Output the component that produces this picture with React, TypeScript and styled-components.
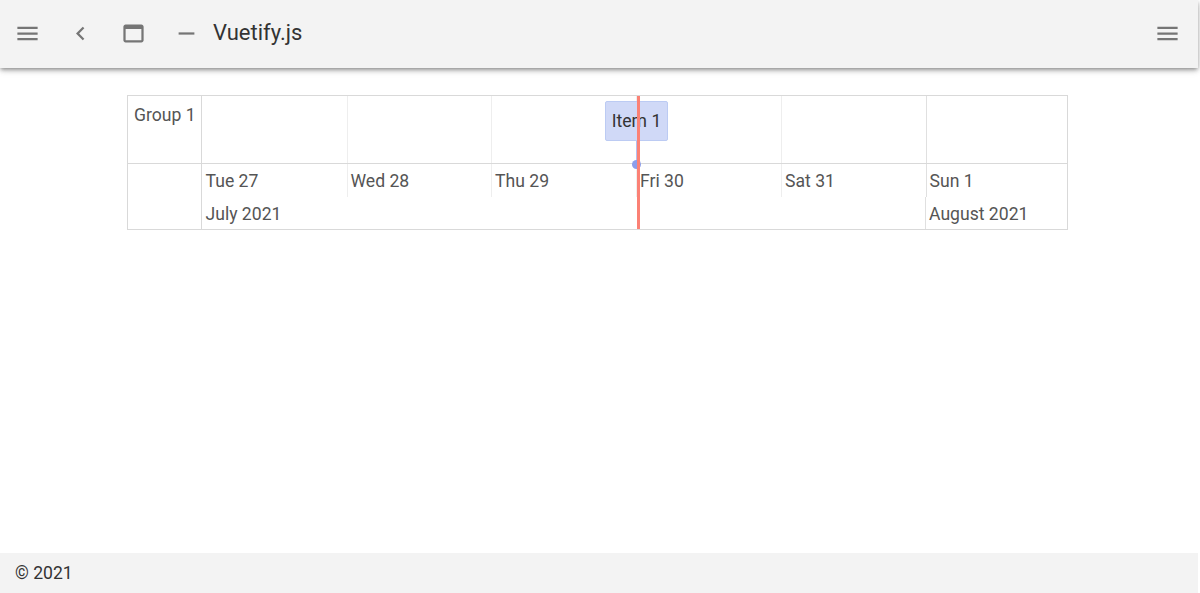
import React from 'react'
import styled, { createGlobalStyle } from 'styled-components'

const days = [
  { label: 'Tue 27', width: 145.5 },
  { label: 'Wed 28', width: 144.5 },
  { label: 'Thu 29', width: 145 },
  { label: 'Fri 30', width: 145 },
  { label: 'Sat 31', width: 144.5 },
  { label: 'Sun 1', width: 140 }
]

const Icon = ({ d }: { d: string }) => (
  <StyledIcon viewBox='0 0 24 24'>
    <path d={d} />
  </StyledIcon>
)

const MENU = 'M3,6H21V8H3V6M3,11H21V13H3V11M3,16H21V18H3V16Z'
const CHEVRON = 'M15.41,16.58L10.83,12L15.41,7.41L14,6L8,12L14,18L15.41,16.58Z'
const WINDOW = 'M19 4H5c-1.11 0-2 .9-2 2v12c0 1.1.89 2 2 2h14c1.1 0 2-.9 2-2V6c0-1.1-.89-2-2-2zm0 14H5V8h14v10z'
const MINUS = 'M19,13H5V11H19V13Z'

const App = () => {
  return (
    <StyledRoot>
      <GlobalStyle />
      <StyledBar>
        <StyledButton><Icon d={MENU} /></StyledButton>
        <StyledButton><Icon d={CHEVRON} /></StyledButton>
        <StyledButton><Icon d={WINDOW} /></StyledButton>
        <StyledButton><Icon d={MINUS} /></StyledButton>
        <StyledTitle>Vuetify.js</StyledTitle>
        <StyledButton $right><Icon d={MENU} /></StyledButton>
      </StyledBar>

      <StyledMain>
        <StyledTimeline>
          <StyledRow>
            <StyledGroup>Group 1</StyledGroup>
            <StyledCells>
              {days.map((day) => (
                <StyledCell key={day.label} $width={day.width} />
              ))}
            </StyledCells>
          </StyledRow>

          <StyledAxis>
            <StyledAxisSpacer />
            <StyledAxisBody>
              <StyledDays>
                {days.map((day) => (
                  <StyledDay key={day.label} $width={day.width}>{day.label}</StyledDay>
                ))}
              </StyledDays>
              <StyledMonths>
                <StyledMonth $grow>July 2021</StyledMonth>
                <StyledMonth>August 2021</StyledMonth>
              </StyledMonths>
            </StyledAxisBody>
          </StyledAxis>

          <StyledItem>Item 1</StyledItem>
          <StyledItemStem />
          <StyledItemDot />
          <StyledCurrentTime />
        </StyledTimeline>
      </StyledMain>

      <StyledFooter>© 2021</StyledFooter>
    </StyledRoot>
  )
}

export default App

const GlobalStyle = createGlobalStyle`
  html, body {
    margin: 0;
    padding: 0;
    background: #fff;
  }

  body {
    font-family: Roboto, 'Liberation Sans', sans-serif;
    overflow: hidden;
  }
`

const StyledRoot = styled.div`
  width: 1198px;
  height: 593px;
  display: flex;
  flex-direction: column;
`

const StyledBar = styled.header`
  height: 68px;
  box-sizing: border-box;
  flex: none;
  display: flex;
  align-items: center;
  padding: 0 1px 2px;
  background: #f3f3f3;
  box-shadow: 0 2px 4px -1px rgba(0, 0, 0, 0.36), 0 3px 5px rgba(0, 0, 0, 0.14), 0 1px 10px rgba(0, 0, 0, 0.1);
  position: relative;
`

const StyledButton = styled.div<{ $right?: boolean }>`
  width: 53px;
  height: 53px;
  flex: none;
  display: flex;
  align-items: center;
  justify-content: center;
  margin-left: ${({ $right }) => ($right ? 'auto' : '0')};
  margin-right: ${({ $right }) => ($right ? '3px' : '0')};
`

const StyledIcon = styled.svg`
  width: 27px;
  height: 27px;
  fill: #757575;
`

const StyledTitle = styled.div`
  font-size: 22px;
  line-height: 30px;
  color: #333;
`

const StyledMain = styled.main`
  flex: 1;
  padding-top: 27px;
`

const StyledTimeline = styled.div`
  width: 941px;
  height: 135px;
  box-sizing: border-box;
  margin-left: 127px;
  border: 1px solid #d9d9d9;
  position: relative;
  color: #555;
  font-size: 17.6px;
`

const StyledRow = styled.div`
  display: flex;
  height: 68px;
  box-sizing: border-box;
  border-bottom: 1px solid #d9d9d9;
`

const StyledGroup = styled.div`
  width: 74px;
  flex: none;
  box-sizing: border-box;
  padding: 8px 0 0 6px;
  line-height: 22px;
  border-right: 1px solid #d9d9d9;
  white-space: nowrap;
`

const StyledCells = styled.div`
  display: flex;
  flex: 1;
`

const StyledCell = styled.div<{ $width: number }>`
  width: ${({ $width }) => $width}px;
  flex: none;
  box-sizing: border-box;
  border-right: 1px solid #eee;

  &:last-child {
    border-right: none;
  }

  &:nth-child(5) {
    border-right-color: #e0e0e0;
  }
`

const StyledAxis = styled.div`
  display: flex;
  height: 65px;
`

const StyledAxisSpacer = styled.div`
  width: 74px;
  flex: none;
  box-sizing: border-box;
  border-right: 1px solid #d9d9d9;
`

const StyledAxisBody = styled.div`
  flex: 1;
  min-width: 0;
  display: flex;
  flex-direction: column;
`

const StyledDays = styled.div`
  display: flex;
  height: 33px;
  flex: none;
`

const StyledDay = styled.div<{ $width: number }>`
  width: ${({ $width }) => $width}px;
  flex: none;
  box-sizing: border-box;
  padding-left: 3px;
  line-height: 34px;
  border-right: 1px solid #eee;

  &:first-child {
    padding-left: 3.5px;
  }

  &:last-child {
    border-right: none;
  }

  &:nth-child(5) {
    border-right-color: #e0e0e0;
  }
`

const StyledMonths = styled.div`
  display: flex;
  flex: 1;
  min-height: 0;
`

const StyledMonth = styled.div<{ $grow?: boolean }>`
  width: ${({ $grow }) => ($grow ? '724px' : 'auto')};
  flex: ${({ $grow }) => ($grow ? 'none' : '1')};
  box-sizing: border-box;
  padding-left: ${({ $grow }) => ($grow ? '3.5px' : '3px')};
  line-height: 34px;
  border-right: ${({ $grow }) => ($grow ? '1px solid #e0e0e0' : 'none')};
`

const StyledItem = styled.div`
  position: absolute;
  left: 477px;
  top: 5px;
  width: 63px;
  height: 40px;
  box-sizing: border-box;
  display: flex;
  align-items: center;
  justify-content: center;
  background: #d0d9f7;
  border: 1px solid #bccbf3;
  border-radius: 2px;
  color: #333;
`

const StyledItemStem = styled.div`
  position: absolute;
  left: 508px;
  top: 45px;
  width: 1px;
  height: 22px;
  background: #b4bff0;
`

const StyledItemDot = styled.div`
  position: absolute;
  left: 504px;
  top: 64px;
  width: 9px;
  height: 9px;
  border-radius: 50%;
  background: #8c9eea;
`

const StyledCurrentTime = styled.div`
  position: absolute;
  left: 509px;
  top: 0;
  bottom: 0;
  width: 3px;
  background: #fb8175;
`

const StyledFooter = styled.footer`
  height: 40px;
  flex: none;
  display: flex;
  align-items: center;
  padding-left: 15px;
  background: #f3f3f3;
  color: #333;
  font-size: 17.6px;
`
